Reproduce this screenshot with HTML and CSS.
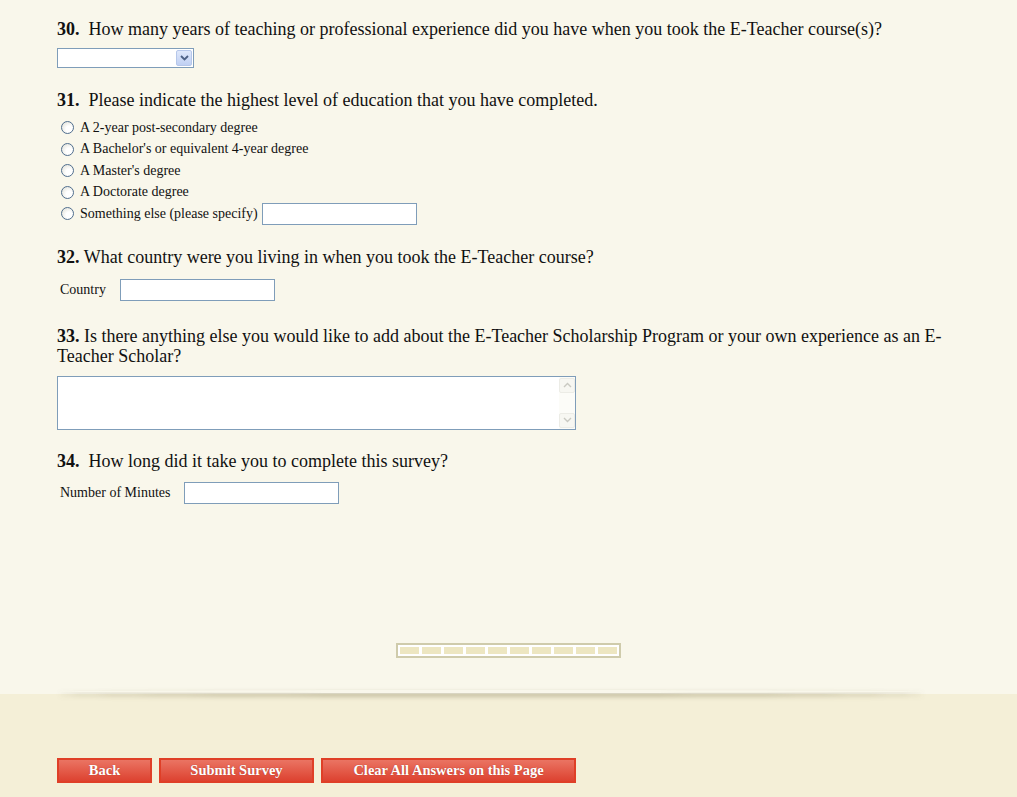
FILE: index.html
```html
<!DOCTYPE html>
<html lang="en">
<head>
<meta charset="utf-8">
<title>E-Teacher Survey</title>
<link rel="stylesheet" href="styles.css">
</head>
<body>
<div class="panel">
  <div class="content">
    <div class="question q30">
      <div class="q-title"><b>30.</b>&nbsp; How many years of teaching or professional experience did you have when you took the E-Teacher course(s)?</div>
      <div class="select">
        <span class="select-btn">
          <svg width="9" height="6" viewBox="0 0 9 6"><path d="M1 1 L4.5 4.5 L8 1" fill="none" stroke="#4d6185" stroke-width="1.8"/></svg>
        </span>
      </div>
    </div>

    <div class="question q31">
      <div class="q-title"><b>31.</b>&nbsp; Please indicate the highest level of education that you have completed.</div>
      <ul class="options">
        <li><span class="radio"></span>A 2-year post-secondary degree</li>
        <li><span class="radio"></span>A Bachelor's or equivalent 4-year degree</li>
        <li><span class="radio"></span>A Master's degree</li>
        <li><span class="radio"></span>A Doctorate degree</li>
        <li><span class="radio"></span>Something else (please specify)<span class="text-input other"></span></li>
      </ul>
    </div>

    <div class="question q32">
      <div class="q-title"><b>32.</b> What country were you living in when you took the E-Teacher course?</div>
      <div class="field-row"><span class="field-label">Country</span><span class="text-input"></span></div>
    </div>

    <div class="question q33">
      <div class="q-title"><b>33.</b> Is there anything else you would like to add about the E-Teacher Scholarship Program or your own experience as an E-Teacher Scholar?</div>
      <div class="textarea">
        <div class="scrollbar">
          <span class="sb-btn"><svg width="9" height="6" viewBox="0 0 9 6"><path d="M1 5 L4.5 1.5 L8 5" fill="none" stroke="#c9c9c2" stroke-width="1.4"/></svg></span>
          <span class="sb-btn"><svg width="9" height="6" viewBox="0 0 9 6"><path d="M1 1 L4.5 4.5 L8 1" fill="none" stroke="#c9c9c2" stroke-width="1.4"/></svg></span>
        </div>
      </div>
    </div>

    <div class="question q34">
      <div class="q-title"><b>34.</b>&nbsp; How long did it take you to complete this survey?</div>
      <div class="field-row"><span class="field-label">Number of Minutes</span><span class="text-input"></span></div>
    </div>
  </div>

  <div class="progress">
    <span></span><span></span><span></span><span></span><span></span>
    <span></span><span></span><span></span><span></span><span></span>
  </div>
</div>

<div class="footer">
  <button class="btn btn-back">Back</button>
  <button class="btn btn-submit">Submit Survey</button>
  <button class="btn btn-clear">Clear All Answers on this Page</button>
</div>
</body>
</html>
```

FILE: styles.css
```css
html, body {
  margin: 0;
  padding: 0;
}

body {
  background: #f4efd7;
  font-family: "Liberation Serif", "Times New Roman", serif;
  color: #111;
  width: 1017px;
  height: 797px;
  overflow: hidden;
}

.panel {
  position: relative;
  background: #f9f7eb;
  height: 694px;
  padding: 19px 0 0 0;
  box-sizing: border-box;
}

.panel::after {
  content: "";
  position: absolute;
  left: 60px;
  right: 95px;
  bottom: 1px;
  height: 3px;
  box-shadow: 0 3px 5px rgba(110, 100, 60, 0.55);
  border-radius: 50%;
  z-index: 0;
}

.content {
  padding-left: 57px;
  width: 895px;
}

.q-title {
  font-size: 18px;
  line-height: 20px;
  color: #111;
}

.q-title b {
  font-weight: bold;
}

.question {
  margin-bottom: 22px;
}

.q30 .q-title { margin-bottom: 9px; }
.q31 .q-title { margin-bottom: 7px; }
.q32 { margin-bottom: 25px; }
.q32 .q-title { margin-bottom: 12px; }
.q33 { margin-bottom: 21px; }
.q33 .q-title { margin-bottom: 10px; }
.q34 .q-title { margin-bottom: 11px; }

/* select */
.select {
  width: 137px;
  height: 20px;
  box-sizing: border-box;
  border: 1px solid #7f9db9;
  background: #fff;
  display: flex;
  justify-content: flex-end;
  align-items: center;
  padding-right: 1px;
}

.select-btn {
  width: 16px;
  height: 16px;
  box-sizing: border-box;
  border: 1px solid #b6c7ea;
  border-radius: 2px;
  background: linear-gradient(#dfe8fb, #c0d0f3);
  display: flex;
  align-items: center;
  justify-content: center;
}

/* radio options */
.options {
  list-style: none;
  margin: 0;
  padding: 0 0 0 4px;
}

.options li {
  display: flex;
  align-items: center;
  height: 21.5px;
  font-size: 14px;
  color: #111;
}

.options li:first-child {
  margin-top: 1px;
}

.radio {
  width: 11px;
  height: 11px;
  border: 1px solid #506e8e;
  border-radius: 50%;
  background: radial-gradient(circle at 65% 65%, #ffffff 30%, #dcdcd2 100%);
  margin-right: 6px;
  flex: none;
}

.text-input {
  display: inline-block;
  width: 155px;
  height: 22px;
  box-sizing: border-box;
  border: 1px solid #7f9db9;
  background: #fff;
}

.text-input.other {
  margin-left: 4px;
  margin-top: 1px;
}

.field-row {
  display: flex;
  align-items: center;
  font-size: 14px;
  padding-left: 3px;
}

.field-label {
  margin-right: 14px;
}

/* textarea */
.textarea {
  width: 519px;
  height: 54px;
  box-sizing: border-box;
  border: 1px solid #7f9db9;
  background: #fff;
  display: flex;
  justify-content: flex-end;
}

.scrollbar {
  width: 16px;
  background: #fcfcf8;
  display: flex;
  flex-direction: column;
  justify-content: space-between;
  padding: 1px 0;
}

.sb-btn {
  height: 15px;
  box-sizing: border-box;
  border: 1px solid #ecece6;
  border-radius: 2px;
  background: #f7f7f2;
  display: flex;
  align-items: center;
  justify-content: center;
}

/* progress */
.progress {
  margin: 139px 0 0 396px;
  width: 225px;
  height: 15px;
  box-sizing: border-box;
  border: 2px solid #cfcbab;
  background: #fff;
  display: flex;
  gap: 3px;
  padding: 2px 2px;
}

.progress span {
  flex: 1;
  background: #ede6c1;
}

/* footer */
.footer {
  display: flex;
  gap: 7px;
  padding: 64px 0 0 57px;
}

.btn {
  height: 25px;
  box-sizing: border-box;
  border: 2px solid #df3f27;
  background: linear-gradient(#ea7463, #dd4230);
  color: #fff;
  font-family: "Liberation Serif", "Times New Roman", serif;
  font-weight: bold;
  font-size: 14.5px;
  padding: 0;
  text-shadow: 0 0 1px rgba(120, 20, 10, 0.6);
  cursor: pointer;
}

.btn-back { width: 95px; }
.btn-submit { width: 155px; }
.btn-clear { width: 255px; }
```
